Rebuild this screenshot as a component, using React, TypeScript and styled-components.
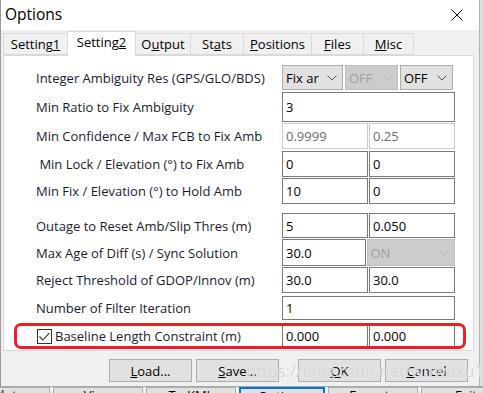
import styled, { createGlobalStyle } from 'styled-components';

const GlobalStyle = createGlobalStyle`
  html, body {
    margin: 0;
    padding: 0;
  }
  body {
    width: 483px;
    height: 393px;
    overflow: hidden;
    font-family: 'Open Sans', 'Noto Sans', sans-serif;
  }
`;

const Screen = styled.div`
  position: relative;
  width: 483px;
  height: 393px;
  overflow: hidden;
  display: grid;
  grid-template-columns: 479px 4px;
  grid-template-rows: 386px 7px;
  background: #f0f0f0;
`;

const Dialog = styled.div`
  display: flex;
  flex-direction: column;
  background: #f0f0f0;
  border-left: 1px solid #9a9a9a;
  box-sizing: border-box;
`;

const TitleBar = styled.div`
  height: 30px;
  background: #ffffff;
  display: flex;
  align-items: center;
  justify-content: space-between;
  padding: 0 16px 0 4px;
`;

const Title = styled.span`
  font-size: 15.5px;
  color: #000;
  margin-top: -2px;
`;

const TabStrip = styled.div`
  height: 25px;
  display: flex;
  align-items: flex-end;
  padding-left: 2px;
`;

const Tab = styled.div<{ $w: number; $active?: boolean }>`
  width: ${(p) => p.$w}px;
  height: ${(p) => (p.$active ? 25 : 22)}px;
  margin-left: -1px;
  margin-bottom: ${(p) => (p.$active ? -1 : 0)}px;
  box-sizing: border-box;
  border: 1px solid #d9d9d9;
  border-bottom: ${(p) => (p.$active ? 'none' : '1px solid #d9d9d9')};
  background: ${(p) => (p.$active ? '#ffffff' : '#f0f0f0')};
  position: relative;
  z-index: ${(p) => (p.$active ? 1 : 0)};
  display: flex;
  align-items: center;
  justify-content: center;
  padding-bottom: ${(p) => (p.$active ? 4 : 0)}px;
  font-size: 13px;
  color: #000;
  &:first-child {
    margin-left: 0;
  }
`;

const Panel = styled.div`
  height: 296px;
  margin: 0 5px 0 2px;
  box-sizing: border-box;
  background: #ffffff;
  border: 1px solid #d9d9d9;
  padding: 9px 0 0 32px;
  display: flex;
  flex-direction: column;
`;

const Row = styled.div<{ $h: number; $mt?: number; $mark?: boolean }>`
  position: relative;
  width: 419px;
  display: grid;
  grid-template-columns: 246px 173px;
  align-items: center;
  height: ${(p) => p.$h}px;
  margin-top: ${(p) => p.$mt ?? 0}px;
  ${(p) =>
    p.$mark &&
    `
    &::after {
      content: '';
      position: absolute;
      left: -22px;
      right: -11px;
      top: 0;
      bottom: 0;
      border: 3px solid #ee1d24;
      border-radius: 7px;
      pointer-events: none;
    }
  `}
`;

const Label = styled.span`
  font-size: 13px;
  color: #1b1b30;
  white-space: nowrap;
  display: flex;
  align-items: center;
`;

const Fields = styled.div<{ $gap?: number }>`
  display: flex;
  gap: ${(p) => p.$gap ?? 1}px;
  height: 100%;
`;

const TextBox = styled.div<{ $off?: boolean }>`
  flex: 1;
  box-sizing: border-box;
  border: 1px solid ${(p) => (p.$off ? '#cccccc' : '#7a7a7a')};
  background: #ffffff;
  color: ${(p) => (p.$off ? '#6d6d6d' : '#000000')};
  padding-left: 3px;
  display: flex;
  align-items: center;
  font-size: 13px;
`;

const Select = styled.div<{ $w?: number; $off?: boolean }>`
  ${(p) => (p.$w ? `width: ${p.$w}px;` : 'flex: 1;')}
  box-sizing: border-box;
  background: ${(p) => (p.$off ? '#cccccc' : '#e1e1e1')};
  border: 1px solid ${(p) => (p.$off ? '#bfbfbf' : '#adadad')};
  color: ${(p) => (p.$off ? '#a0a0a0' : '#000000')};
  display: flex;
  align-items: center;
  justify-content: space-between;
  padding: 0 5px 0 3px;
  font-size: 13px;
  overflow: hidden;
  white-space: nowrap;
`;

const Check = styled.span`
  width: 15px;
  height: 15px;
  box-sizing: border-box;
  border: 1px solid #333333;
  background: #ffffff;
  margin: 0 3px 0 1px;
  display: flex;
  align-items: center;
  justify-content: center;
`;

const ButtonBar = styled.div`
  flex: 1;
  display: flex;
  gap: 19px;
  padding: 8px 0 0 108px;
`;

const ButtonGroup = styled.div`
  display: flex;
  gap: 4px;
`;

const Button = styled.div`
  width: 83px;
  height: 23px;
  box-sizing: border-box;
  background: #e1e1e1;
  border: 1px solid #adadad;
  display: flex;
  align-items: center;
  justify-content: center;
  font-size: 13px;
  color: #000;
`;

const SideStrip = styled.div`
  background: #dedede;
  border-left: 1px solid #b4b4b4;
`;

const BackStrip = styled.div`
  grid-column: 1 / -1;
  display: flex;
  overflow: hidden;
  background: #f0f0f0;
  border-top: 1px solid #a8a8a8;
  margin-left: -40px;
`;

const BackButton = styled.div<{ $focus?: boolean }>`
  width: ${(p) => (p.$focus ? 86 : 90)}px;
  height: 20px;
  flex: none;
  box-sizing: border-box;
  background: #e1e1e1;
  border: ${(p) => (p.$focus ? '2px solid #0078d7' : '1px solid #adadad')};
  margin-right: 3px;
  text-align: center;
  font-size: 13px;
  line-height: 14px;
  color: #000;
`;

const Watermark = styled.span`
  position: absolute;
  left: 246px;
  top: 360px;
  font-size: 16px;
  letter-spacing: 0.2px;
  color: rgba(205, 205, 205, 0.85);
  text-shadow: 0 0 1px rgba(255, 255, 255, 0.9);
  pointer-events: none;
`;

const Chevron = ({ off }: { off?: boolean }) => (
  <svg width="10" height="6" viewBox="0 0 10 6">
    <polyline points="0.5,0.5 5,5 9.5,0.5" fill="none" stroke={off ? '#b8b8b8' : '#555555'} strokeWidth="1" />
  </svg>
);

const tabs = [
  { w: 65, pre: 'Setting', key: '1', post: '' },
  { w: 69, pre: 'Setting', key: '2', post: '', active: true },
  { w: 56, pre: 'O', key: 'u', post: 'tput' },
  { w: 54, pre: 'St', key: 'a', post: 'ts' },
  { w: 69, pre: '', key: 'P', post: 'ositions' },
  { w: 53, pre: '', key: 'F', post: 'iles' },
  { w: 51, pre: '', key: 'M', post: 'isc' },
];

const App = () => {
  return (
    <>
      <GlobalStyle />
      <Screen>
        <Dialog>
          <TitleBar>
            <Title>Options</Title>
            <svg width="12" height="12" viewBox="0 0 12 12">
              <path d="M0.5 0.5 L11.5 11.5 M11.5 0.5 L0.5 11.5" stroke="#111" strokeWidth="1" />
            </svg>
          </TitleBar>
          <TabStrip>
            {tabs.map((t) => (
              <Tab key={t.pre + t.key} $w={t.w} $active={t.active}>
                {t.pre}
                <u>{t.key}</u>
                {t.post}
              </Tab>
            ))}
          </TabStrip>
          <Panel>
            <Row $h={25}>
              <Label>Integer Ambiguity Res (GPS/GLO/BDS)</Label>
              <Fields $gap={2}>
                <Select $w={61}>
                  Fix ar <Chevron />
                </Select>
                <Select $w={53} $off>
                  OFF <Chevron off />
                </Select>
                <Select $w={53}>
                  OFF <Chevron />
                </Select>
              </Fields>
            </Row>
            <Row $h={30} $mt={2}>
              <Label>Min Ratio to Fix Ambiguity</Label>
              <Fields>
                <TextBox>3</TextBox>
              </Fields>
            </Row>
            <Row $h={26} $mt={1}>
              <Label>Min Confidence / Max FCB to Fix Amb</Label>
              <Fields>
                <TextBox $off>0.9999</TextBox>
                <TextBox $off>0.25</TextBox>
              </Fields>
            </Row>
            <Row $h={26} $mt={2}>
              <Label>&nbsp;Min Lock / Elevation (°) to Fix Amb</Label>
              <Fields>
                <TextBox>0</TextBox>
                <TextBox>0</TextBox>
              </Fields>
            </Row>
            <Row $h={26} $mt={1}>
              <Label>Min Fix / Elevation (°) to Hold Amb</Label>
              <Fields>
                <TextBox>10</TextBox>
                <TextBox>0</TextBox>
              </Fields>
            </Row>
            <Row $h={25} $mt={9}>
              <Label>Outage to Reset Amb/Slip Thres (m)</Label>
              <Fields>
                <TextBox>5</TextBox>
                <TextBox>0.050</TextBox>
              </Fields>
            </Row>
            <Row $h={27} $mt={1}>
              <Label>Max Age of Diff (s) / Sync Solution</Label>
              <Fields>
                <TextBox>30.0</TextBox>
                <Select $off>
                  ON <Chevron off />
                </Select>
              </Fields>
            </Row>
            <Row $h={26} $mt={1}>
              <Label>Reject Threshold of GDOP/Innov (m)</Label>
              <Fields>
                <TextBox>30.0</TextBox>
                <TextBox>30.0</TextBox>
              </Fields>
            </Row>
            <Row $h={24} $mt={3}>
              <Label>Number of Filter Iteration</Label>
              <Fields>
                <TextBox>1</TextBox>
              </Fields>
            </Row>
            <Row $h={26} $mt={3} $mark>
              <Label>
                <Check>
                  <svg width="11" height="9" viewBox="0 0 11 9">
                    <polyline points="0.5,4.5 3.8,8 10.5,0.8" fill="none" stroke="#333" strokeWidth="1.1" />
                  </svg>
                </Check>
                Baseline Length Constraint (m)
              </Label>
              <Fields>
                <TextBox>0.000</TextBox>
                <TextBox>0.000</TextBox>
              </Fields>
            </Row>
          </Panel>
          <ButtonBar>
            <ButtonGroup>
              <Button>
                <u>L</u>oad...
              </Button>
              <Button>
                <u>S</u>ave...
              </Button>
            </ButtonGroup>
            <ButtonGroup>
              <Button>
                <u>O</u>K
              </Button>
              <Button>
                <u>C</u>ancel
              </Button>
            </ButtonGroup>
          </ButtonBar>
        </Dialog>
        <SideStrip />
        <BackStrip>
          <BackButton>Plot</BackButton>
          <BackButton>View</BackButton>
          <BackButton>To KML</BackButton>
          <BackButton $focus>Options</BackButton>
          <BackButton>Execute</BackButton>
          <BackButton>Exit</BackButton>
        </BackStrip>
        <Watermark>https://blog.csdn.net/wuwuku123</Watermark>
      </Screen>
    </>
  );
};

export default App;
